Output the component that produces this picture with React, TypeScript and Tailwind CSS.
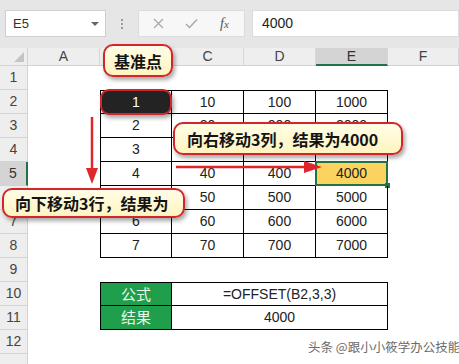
import React from 'react';

const COLS = ['A', 'B', 'C', 'D', 'E', 'F'];
const ROWS = Array.from({ length: 13 }, (_, i) => i + 1);

const num = "font-['Liberation_Sans',sans-serif]";
const cjk = "font-['Noto_Sans_CJK_SC',sans-serif]";

const Bubble = ({ className, children }: { className: string; children: React.ReactNode }) => (
  <div
    className={`absolute flex items-center rounded-[10px] border-2 border-[#d0262c] bg-gradient-to-b from-[#fffde6] to-[#fff4bf] font-bold text-[16px] text-[#141414] shadow-[2px_3px_4px_rgba(0,0,0,0.35)] ${cjk} ${className}`}
  >
    {children}
  </div>
);

const Cell = ({ r, c }: { r: number; c: number }) => {
  const inTable = r >= 2 && r <= 8 && c >= 1 && c <= 4;
  if (inTable) {
    const n = r - 1;
    const v = [n, n * 10, n * 100, n * 1000][c - 1];
    const sel = r === 5 && c === 4;
    return (
      <div
        className={`relative flex items-center justify-center border-r border-b border-black text-[14px] text-[#222] ${num} ${c === 1 ? 'border-l' : ''} ${r === 2 ? 'border-t' : ''} ${sel ? 'bg-[#fcd35e]' : ''}`}
      >
        {v}
        {sel && (
          <>
            <div className="absolute -inset-[1px] border-2 border-[#217346]" />
            <div className="absolute -right-[3px] -bottom-[3px] h-[5px] w-[5px] bg-[#217346]" />
          </>
        )}
        {r === 2 && c === 1 && (
          <div className="absolute -inset-x-[1px] -top-[2px] -bottom-[2px] flex items-center justify-center rounded-[9px] border-2 border-[#d0262c] bg-[#232323] text-white shadow-[2px_3px_4px_rgba(0,0,0,0.35)]">
            1
          </div>
        )}
      </div>
    );
  }
  if (r === 10 || r === 11) {
    if (c === 1)
      return (
        <div className={`flex items-center justify-center border-x border-b border-black bg-[#1f9e4b] text-[15px] text-[#eaf7ea] ${cjk} ${r === 10 ? 'border-t' : ''}`}>
          {r === 10 ? '公式' : '结果'}
        </div>
      );
    if (c === 2)
      return (
        <div className={`col-span-3 flex items-center justify-center border-r border-b border-black text-[14px] text-[#222] ${num} ${r === 10 ? 'border-t' : ''}`}>
          {r === 10 ? '=OFFSET(B2,3,3)' : '4000'}
        </div>
      );
    if (c === 3 || c === 4) return null;
  }
  return <div />;
};

export default function App() {
  return (
    <div className={`relative h-[364px] w-[459px] overflow-hidden bg-white ${num}`}>
      {/* toolbar */}
      <div className="flex h-[48px] items-start bg-[#e6e6e6] pt-[10px]">
        <div className="ml-[5px] flex h-[27px] w-[101px] items-center justify-between border border-[#cfcfcf] bg-white pl-[7px] pr-[6px] text-[13px] text-[#333]">
          E5
          <span className="h-0 w-0 border-x-[4px] border-t-[4px] border-x-transparent border-t-[#666]" />
        </div>
        <div className="flex h-[27px] w-[32px] flex-col items-center justify-center gap-[2px]">
          <span className="h-[2px] w-[2px] bg-[#999]" />
          <span className="h-[2px] w-[2px] bg-[#999]" />
          <span className="h-[2px] w-[2px] bg-[#999]" />
        </div>
        <div className="flex h-[27px] w-[107px] items-center border border-[#dcdcdc] bg-[#f7f7f7] pl-[14px]">
          <svg width="11" height="11" viewBox="0 0 11 11" className="mr-[21px]">
            <path d="M1 1L10 10M10 1L1 10" stroke="#a8a8a8" strokeWidth="1.3" />
          </svg>
          <svg width="13" height="11" viewBox="0 0 13 11" className="mr-[22px]">
            <path d="M1 6L4.5 9.5L12 1.5" stroke="#a8a8a8" strokeWidth="1.4" fill="none" />
          </svg>
          <span className="font-['Liberation_Serif',serif] text-[14px] italic text-[#555]">
            f<span className="text-[11px]">x</span>
          </span>
        </div>
        <div className="ml-[7px] flex h-[27px] flex-1 items-center border border-[#dcdcdc] bg-white pl-[9px] text-[14px] text-[#222]">
          4000
        </div>
      </div>

      {/* sheet */}
      <div className="grid grid-cols-[28px_72px_72px_72px_72px_72px_1fr] grid-rows-[18px_repeat(13,24px)]">
        <div className="relative border-r border-b border-[#d2d2d2] bg-[#eeeeee]">
          <svg className="absolute right-[3px] bottom-[3px]" width="10" height="10" viewBox="0 0 10 10">
            <path d="M10 0V10H0Z" fill="#c4c4c4" />
          </svg>
        </div>
        {COLS.map((c) => (
          <div
            key={c}
            className={`flex items-center justify-center border-r border-r-[#d6d6d6] text-[14px] ${c === 'E' ? 'border-b-2 border-b-[#217346] bg-[#d4d4d4] text-[#333]' : 'border-b border-b-[#d2d2d2] bg-[#eeeeee] text-[#444]'}`}
          >
            {c}
          </div>
        ))}
        {ROWS.map((r) => (
          <React.Fragment key={r}>
            <div
              className={`flex items-center justify-center border-b border-b-[#d2d2d2] text-[14px] ${r === 5 ? 'border-r-2 border-r-[#217346] bg-[#d4d4d4] text-[#333]' : 'border-r border-r-[#d2d2d2] bg-[#eeeeee] text-[#444]'}`}
            >
              {r <= 12 ? r : ''}
            </div>
            {COLS.map((_, c) => (
              <Cell key={c} r={r} c={c} />
            ))}
          </React.Fragment>
        ))}
      </div>

      {/* arrows */}
      <svg className="absolute left-[84px] top-[116px]" width="16" height="70" viewBox="0 0 16 70">
        <path d="M8 1V56" stroke="#e0262b" strokeWidth="2.5" />
        <path d="M2 52L8 68L14 52Z" fill="#e0262b" />
      </svg>
      <svg className="absolute left-[174px] top-[159px]" width="150" height="16" viewBox="0 0 150 16">
        <path d="M2 8H134" stroke="#e0262b" strokeWidth="2.5" />
        <path d="M130 2L148 8L130 14Z" fill="#e0262b" />
      </svg>

      {/* callouts */}
      <Bubble className="left-[103px] top-[44px] h-[33px] w-[70px] justify-center">基准点</Bubble>
      <Bubble className="left-[173px] top-[122px] h-[33px] w-[230px] pl-[12px]">向右移动3列，结果为4000</Bubble>
      <Bubble className="left-[2px] top-[188px] h-[30px] w-[183px] pl-[11px]">向下移动3行，结果为</Bubble>

      <div className={`absolute left-[308px] top-[338px] whitespace-nowrap text-[12.5px] text-[#6a6a6a] ${cjk}`}>
        头条 @跟小小筱学办公技能
      </div>
    </div>
  );
}
